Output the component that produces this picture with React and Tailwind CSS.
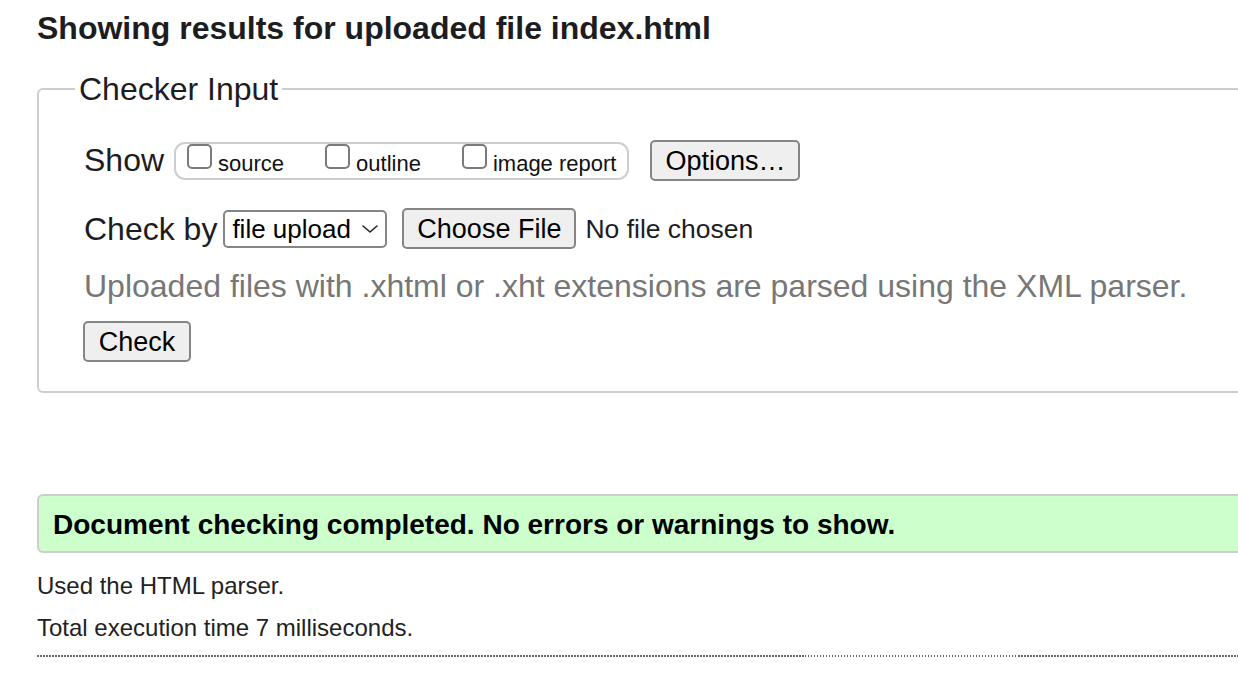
import React from "react";

function Checkbox() {
  return <span className="block w-[25px] h-[25px] shrink-0 bg-white border-2 border-[#7a7a7a] rounded-[5px]" />;
}

function Item({ label }) {
  return (
    <span className="flex items-start gap-[6px]">
      <Checkbox />
      <span className="text-[22px] leading-[25px] pt-[7px] text-[#111]">{label}</span>
    </span>
  );
}

function Btn({ children, className = "" }) {
  return (
    <span
      className={
        "flex items-center justify-center h-[41px] bg-[#efefef] border-2 border-[#858585] rounded-[5px] text-[27px] leading-[35px] pt-[2px] text-black " +
        className
      }
    >
      {children}
    </span>
  );
}

export default function App() {
  return (
    <div
      className="w-[1238px] h-[686px] overflow-hidden bg-white text-[#222]"
      style={{ fontFamily: '"Liberation Sans", Arial, Helvetica, sans-serif' }}
    >
      <div className="w-[1300px] pl-[37px]">
        <h2 className="h-[57px] leading-[57px] text-[32px] font-bold text-[#1d1d1f]">
          Showing results for uploaded file index.html
        </h2>

        <fieldset className="mt-[12px] border-2 border-[#cdcdcd] rounded-[6px]">
          <legend className="ml-[36px] px-[4px] text-[32px] leading-[40px] text-[#1d1d1f]">Checker Input</legend>
          <div className="pl-[45px] pt-[31px] pb-[29px]">
            <div className="flex items-center h-[41px]">
              <span className="text-[32px] leading-[39px] pb-[1px] text-[#1d1d1f]">Show</span>
              <div className="ml-[10px] flex items-start h-[38px] border-2 border-[#cdcdcd] rounded-[11px] pl-[11px] pr-[11px] gap-[41px]">
                <Item label="source" />
                <Item label="outline" />
                <Item label="image report" />
              </div>
              <Btn className="ml-[21px] w-[150px]">Options…</Btn>
            </div>

            <div className="flex items-center h-[41px] mt-[27px]">
              <span className="text-[32px] leading-[39px] pt-[2px] text-[#1d1d1f]">Check by</span>
              <span className="ml-[6px] flex items-center justify-between h-[38px] w-[164px] border-2 border-[#858585] rounded-[5px] pl-[7px] pr-[6px] text-[26px] leading-[34px] text-black bg-white">
                <span className="pt-[1px]">file upload</span>
                <svg width="18" height="10" viewBox="0 0 18 10" fill="none">
                  <polyline points="2,2 9,8 16,2" stroke="#222" strokeWidth="1.6" strokeLinecap="round" strokeLinejoin="round" />
                </svg>
              </span>
              <Btn className="ml-[15px] w-[174px]">Choose File</Btn>
              <span className="ml-[9px] text-[26.5px] leading-[39px] pt-[2px] text-[#1d1d1f]">No file chosen</span>
            </div>

            <p className="mt-[16px] h-[41px] text-[32px] leading-[41px] pt-[1px] text-[#777]">
              Uploaded files with .xhtml or .xht extensions are parsed using the XML parser.
            </p>

            <div className="flex mt-[15px] -ml-[1px]">
              <Btn className="w-[108px]">Check</Btn>
            </div>
          </div>
        </fieldset>

        <div className="mt-[101px] h-[59px] bg-[#ccffcc] border-2 border-[#cdcdcd] rounded-[6px] pl-[14px] flex items-center">
          <span className="text-[28px] font-bold leading-[55px] text-black pt-[2px]">
            Document checking completed. No errors or warnings to show.
          </span>
        </div>

        <p className="mt-[18px] text-[24px] leading-[30px] text-[#222]">Used the HTML parser.</p>
        <p className="mt-[12px] text-[24px] leading-[30px] text-[#222]">Total execution time 7 milliseconds.</p>

        <div className="mt-[12px] h-[2px] bg-[repeating-linear-gradient(90deg,#6a6a6a_0px,#6a6a6a_1.5px,transparent_1.5px,transparent_3px)]" />
      </div>
    </div>
  );
}
